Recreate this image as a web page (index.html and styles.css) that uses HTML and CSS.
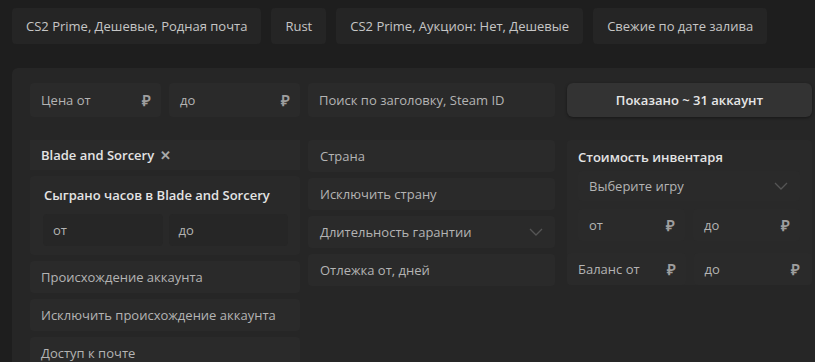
FILE: index.html
```html
<!DOCTYPE html>
<html>

<head>
	<title>Аккаунты</title>
	<link rel="stylesheet" href="styles.css">
</head>

<body>
	<!-- Сохранённые фильтры -->
	<div class="tabs">
		<div class="tab">CS2 Prime, Дешевые, Родная почта</div>
		<div class="tab">Rust</div>
		<div class="tab">CS2 Prime, Аукцион: Нет, Дешевые</div>
		<div class="tab">Свежие по дате залива</div>
	</div>

	<div class="panel">
		<div class="row-top">
			<div class="pair col-left">
				<div class="field">Цена от <span class="rub">₽</span></div>
				<div class="field">до <span class="rub">₽</span></div>
			</div>
			<div class="field col-mid">Поиск по заголовку, Steam ID</div>
			<button class="btn col-right">Показано ~ 31 аккаунт</button>
		</div>

		<div class="row-main">
			<div class="col col-left">
				<div class="tag">Blade and Sorcery <span class="close">✕</span></div>
				<div class="box hours">
					<div class="box-title">Сыграно часов в Blade and Sorcery</div>
					<div class="pair">
						<div class="field">от</div>
						<div class="field">до</div>
					</div>
				</div>
				<div class="field">Происхождение аккаунта</div>
				<div class="field">Исключить происхождение аккаунта</div>
				<div class="field">Доступ к почте</div>
			</div>

			<div class="col col-mid">
				<div class="field">Страна</div>
				<div class="field">Исключить страну</div>
				<div class="field">Длительность гарантии
					<svg class="chevron" width="14" height="8" viewBox="0 0 14 8"><path d="M1 1l6 6 6-6" fill="none" stroke="#555" stroke-width="1.3"/></svg>
				</div>
				<div class="field">Отлежка от, дней</div>
			</div>

			<div class="col col-right">
				<div class="box inventory">
					<div class="box-title">Стоимость инвентаря</div>
					<div class="field select">Выберите игру
						<svg class="chevron" width="14" height="8" viewBox="0 0 14 8"><path d="M1 1l6 6 6-6" fill="none" stroke="#555" stroke-width="1.3"/></svg>
					</div>
					<div class="pair">
						<div class="field">от <span class="rub">₽</span></div>
						<div class="field">до <span class="rub">₽</span></div>
					</div>
					<div class="pair balance">
						<div class="field">Баланс от <span class="rub">₽</span></div>
						<div class="field">до <span class="rub">₽</span></div>
					</div>
				</div>
			</div>
		</div>
	</div>
</body>

</html>
```

FILE: styles.css
```css
html,
body {
	height: 100%;
}

body {
	margin: 0;
	background-color: #1e1e1e;
	font-family: "Open Sans", Arial, sans-serif;
	font-size: 13px;
	color: #bdbdbd;
	overflow: hidden;
}

.tabs {
	display: flex;
	gap: 10px;
	padding: 8px 12px 0;
}

.tab {
	height: 36px;
	line-height: 36px;
	padding: 0 14px;
	background-color: #252525;
	border-radius: 4px;
	color: #c6c6c6;
	white-space: nowrap;
}

/* Основная панель фильтров */
.panel {
	margin: 24px 0 0 12px;
	padding: 15px 0 20px 18px;
	background-color: #262626;
	border-radius: 6px 0 0 0;
	width: 815px;
	min-height: 300px;
}

.row-top,
.row-main {
	display: flex;
	gap: 8px;
}

.col-left {
	width: 270px;
}

.col-mid {
	width: 247px;
}

.col-right {
	width: 245px;
	margin-left: 4px;
}

.row-main {
	margin-top: 23px;
	align-items: flex-start;
}

.pair {
	display: grid;
	grid-template-columns: 1fr 1fr;
	gap: 8px;
}

.field {
	display: flex;
	align-items: center;
	height: 34px;
	padding: 0 10px 0 11px;
	background-color: #2a2a2a;
	border-radius: 4px;
	color: #b4b4b4;
	white-space: nowrap;
	box-sizing: border-box;
}

.rub {
	margin-left: auto;
	font-weight: 600;
	font-size: 15px;
	color: #9e9e9e;
}

.btn {
	height: 34px;
	border: none;
	border-radius: 6px;
	background-color: #333333;
	color: #e6e6e6;
	font-family: inherit;
	font-size: 13px;
	font-weight: 600;
	box-shadow: 0 1px 3px rgba(0, 0, 0, 0.4);
}

.col {
	display: flex;
	flex-direction: column;
	gap: 6px;
}

.col .field {
	height: 32px;
}

.col-mid .field {
	padding-left: 12px;
}

.tag {
	display: flex;
	align-items: center;
	height: 30px;
	padding: 0 10px 0 11px;
	background-color: #2a2a2a;
	color: #e4e4e4;
	font-weight: 600;
}

.close {
	margin-left: 6px;
	font-size: 13px;
	font-weight: bold;
	color: #a8a8a8;
}

.box {
	background-color: #292929;
	border-radius: 4px;
}

.box-title {
	font-weight: 600;
	color: #e4e4e4;
}

.hours {
	padding: 10px 12px 9px 14px;
}

.hours .pair {
	margin-top: 10px;
	margin-left: -1px;
	gap: 6px;
}

.hours .field {
	background-color: #262626;
	padding-left: 10px;
}

.inventory {
	padding: 8px 0 0 0;
}

.inventory .box-title {
	padding-left: 11px;
}

.inventory .select {
	margin: 5px 12px 0 11px;
	height: 30px;
	background-color: #2a2a2a;
}

.inventory .pair {
	margin: 8px 12px 0 11px;
}

.inventory .balance {
	margin: 12px 0 0 0;
}

.inventory .balance .field:last-child {
	padding-right: 12px;
}

.chevron {
	margin-left: auto;
	margin-right: 2px;
}
```
